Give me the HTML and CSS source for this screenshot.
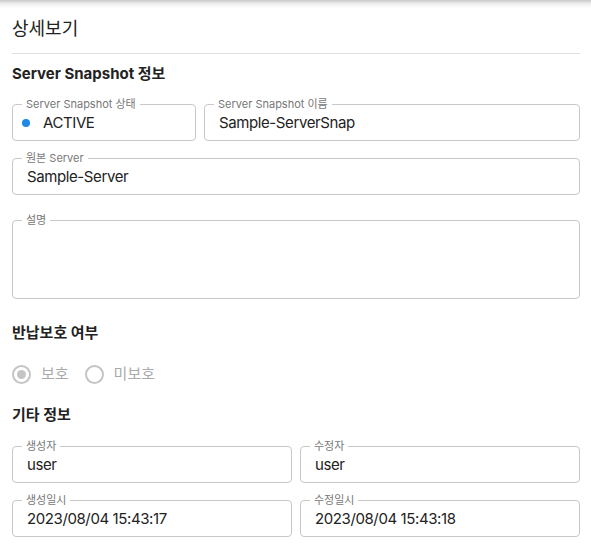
FILE: index.html
```html
<!DOCTYPE html>
<html lang="ko">
<head>
<meta charset="utf-8">
<title>상세보기</title>
<link rel="stylesheet" href="styles.css">
</head>
<body>
<div class="topshadow"></div>
<main class="page">
  <h1 class="title">상세보기</h1>
  <hr class="divider">

  <h2 class="section section-first">Server Snapshot 정보</h2>
  <div class="grid">
    <fieldset class="field col-4">
      <legend>Server Snapshot 상태</legend>
      <div class="value value-status"><span class="dot"></span>ACTIVE</div>
    </fieldset>
    <fieldset class="field col-8">
      <legend>Server Snapshot 이름</legend>
      <div class="value">Sample-ServerSnap</div>
    </fieldset>
    <fieldset class="field col-12">
      <legend>원본 Server</legend>
      <div class="value">Sample-Server</div>
    </fieldset>
    <fieldset class="field col-12 field-desc">
      <legend>설명</legend>
      <div class="value value-area"></div>
    </fieldset>
  </div>

  <h2 class="section section-return">반납보호 여부</h2>
  <div class="radios">
    <label class="radio"><span class="ring checked"></span><span class="rlabel">보호</span></label>
    <label class="radio"><span class="ring"></span><span class="rlabel">미보호</span></label>
  </div>

  <h2 class="section section-etc">기타 정보</h2>
  <div class="grid">
    <fieldset class="field col-6">
      <legend>생성자</legend>
      <div class="value">user</div>
    </fieldset>
    <fieldset class="field col-6">
      <legend>수정자</legend>
      <div class="value">user</div>
    </fieldset>
    <fieldset class="field col-6">
      <legend>생성일시</legend>
      <div class="value">2023/08/04 15:43:17</div>
    </fieldset>
    <fieldset class="field col-6">
      <legend>수정일시</legend>
      <div class="value">2023/08/04 15:43:18</div>
    </fieldset>
  </div>
</main>
</body>
</html>
```
FILE: styles.css
```css
* { box-sizing: border-box; }
html, body { margin: 0; padding: 0; background: #fff; }
body {
  font-family: "Inter", "Noto Sans CJK KR", sans-serif;
  color: #222;
  width: 591px;
  height: 548px;
  overflow: hidden;
}
.topshadow {
  height: 8px;
  background: linear-gradient(to bottom, rgba(0,0,0,0.22), rgba(0,0,0,0.08) 40%, rgba(0,0,0,0));
}
.page {
  padding: 0 11px 0 12px;
}
.title {
  margin: 9px 0 0 0;
  font-size: 18px;
  font-weight: 400;
  line-height: 24px;
  height: 24px;
}
.divider {
  margin: 12px 0 0 0;
  border: 0;
  height: 1px;
  background: #e0e0e0;
}
.section {
  margin: 0;
  font-size: 15px;
  font-weight: 700;
  line-height: 20px;
  height: 20px;
  color: #222;
}
.section-first { margin-top: 10px; }
.section-return { margin-top: 24px; }
.section-etc { margin-top: 21px; }

.grid {
  display: grid;
  grid-template-columns: repeat(12, 1fr);
  column-gap: 8px;
  row-gap: 11px;
}
.section-first + .grid { margin-top: 14px; }
.section-etc + .grid { margin-top: 15px; }
.col-4 { grid-column: span 4; }
.col-6 { grid-column: span 6; }
.col-8 { grid-column: span 8; }
.col-12 { grid-column: span 12; }

.field {
  margin: 0;
  padding: 0;
  min-width: 0;
  border: 1px solid #c8c8c8;
  border-radius: 4px;
}
.field.field-desc { margin-top: 8px; }
.field legend {
  margin-left: 9px;
  padding: 0 4px;
  font-size: 11px;
  line-height: 12px;
  color: #777;
}
.value {
  height: 30px;
  padding: 0 14px;
  font-size: 15px;
  letter-spacing: -0.4px;
  line-height: 25px;
  color: #222;
  white-space: nowrap;
}
.value-status {
  display: flex;
  align-items: center;
  padding-left: 9px;
  height: 25px;
  margin-bottom: 5px;
}
.dot {
  width: 8px;
  height: 8px;
  border-radius: 50%;
  background: #1e88e5;
  margin-right: 13px;
  flex: none;
}
.value-area {
  height: 72px;
}

.radios {
  display: flex;
  align-items: center;
  margin-top: 21px;
  height: 20px;
}
.radio {
  display: flex;
  align-items: center;
  margin-right: 16px;
}
.ring {
  width: 19px;
  height: 19px;
  border: 2px solid #c4c4c4;
  border-radius: 50%;
  display: flex;
  align-items: center;
  justify-content: center;
  flex: none;
}
.ring.checked::after {
  content: "";
  width: 9px;
  height: 9px;
  border-radius: 50%;
  background: #c4c4c4;
}
.rlabel {
  margin-left: 10px;
  font-size: 15px;
  line-height: 20px;
  color: #aaa;
}
```
